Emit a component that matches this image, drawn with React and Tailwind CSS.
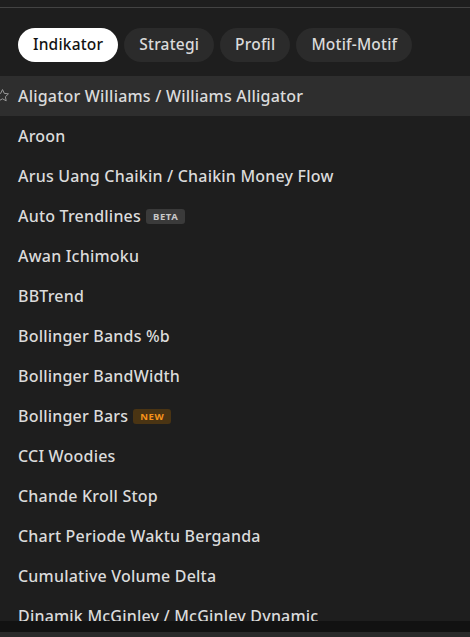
import React from "react";

const items = [
    { name: "Aligator Williams / Williams Alligator", active: true },
    { name: "Aroon" },
    { name: "Arus Uang Chaikin / Chaikin Money Flow" },
    { name: "Auto Trendlines", badge: "beta" },
    { name: "Awan Ichimoku" },
    { name: "BBTrend" },
    { name: "Bollinger Bands %b" },
    { name: "Bollinger BandWidth" },
    { name: "Bollinger Bars", badge: "new" },
    { name: "CCI Woodies" },
    { name: "Chande Kroll Stop" },
    { name: "Chart Periode Waktu Berganda" },
    { name: "Cumulative Volume Delta" },
    { name: "Dinamik McGinley / McGinley Dynamic" },
];

const tabs = ["Indikator", "Strategi", "Profil", "Motif-Motif"];

const StarIcon = () => (
    <svg width="15" height="15" viewBox="0 0 24 24" fill="none" stroke="#9a9a9a" strokeWidth="1.6" strokeLinejoin="round">
        <path d="M12 2.5l2.9 6.1 6.6.8-4.9 4.6 1.3 6.5L12 17.3l-5.9 3.2 1.3-6.5-4.9-4.6 6.6-.8z" />
    </svg>
);

export default function App() {
    return (
        <div className="w-[470px] h-[637px] bg-[#1e1e1e] flex flex-col overflow-hidden font-['Noto_Sans',sans-serif]">
            {/* top edge */}
            <div className="h-[8px] bg-[#1e1e1e] border-b border-[#434343] shrink-0" />

            {/* Tabs */}
            <div className="flex gap-[6px] px-[18px] pt-[20px] pb-[14px] shrink-0">
                {tabs.map((t, i) => (
                    <button
                        key={t}
                        className={`h-[34px] px-[15px] rounded-full text-[15.5px] tracking-[0.2px] font-medium ${i === 0
                            ? "bg-white text-[#131313]"
                            : "bg-[#2b2b2b] text-[#dbdbdb]"
                            }`}
                    >
                        {t}
                    </button>
                ))}
            </div>

            {/* List */}
            <div className="flex-1 overflow-hidden">
                <ul>
                    {items.map((it) => (
                        <li
                            key={it.name}
                            className={`relative h-[40px] flex items-center pl-[18px] text-[16px] tracking-[0.2px] font-medium text-[#dbdbdb] whitespace-nowrap ${it.active ? "bg-[#2e2e2e]" : ""
                                }`}
                        >
                            {it.active && (
                                <span className="absolute left-[-5px] top-[12px]">
                                    <StarIcon />
                                </span>
                            )}
                            <span>{it.name}</span>
                            {it.badge === "beta" && (
                                <span className="ml-[5px] h-[15px] px-[7px] rounded-[3px] bg-[#3a3a3a] text-[#c8c8c8] text-[9.5px] font-bold leading-[15px] tracking-[0.6px]">
                                    BETA
                                </span>
                            )}
                            {it.badge === "new" && (
                                <span className="ml-[5px] h-[15px] px-[7px] rounded-[3px] bg-[#4a3413] text-[#f7931a] text-[9.5px] font-bold leading-[15px] tracking-[0.6px]">
                                    NEW
                                </span>
                            )}
                        </li>
                    ))}
                </ul>
            </div>

            {/* bottom bars */}
            <div className="h-[11px] bg-[#121212] shrink-0" />
            <div className="h-[5px] bg-[#2a2a2a] shrink-0" />
        </div>
    );
}
